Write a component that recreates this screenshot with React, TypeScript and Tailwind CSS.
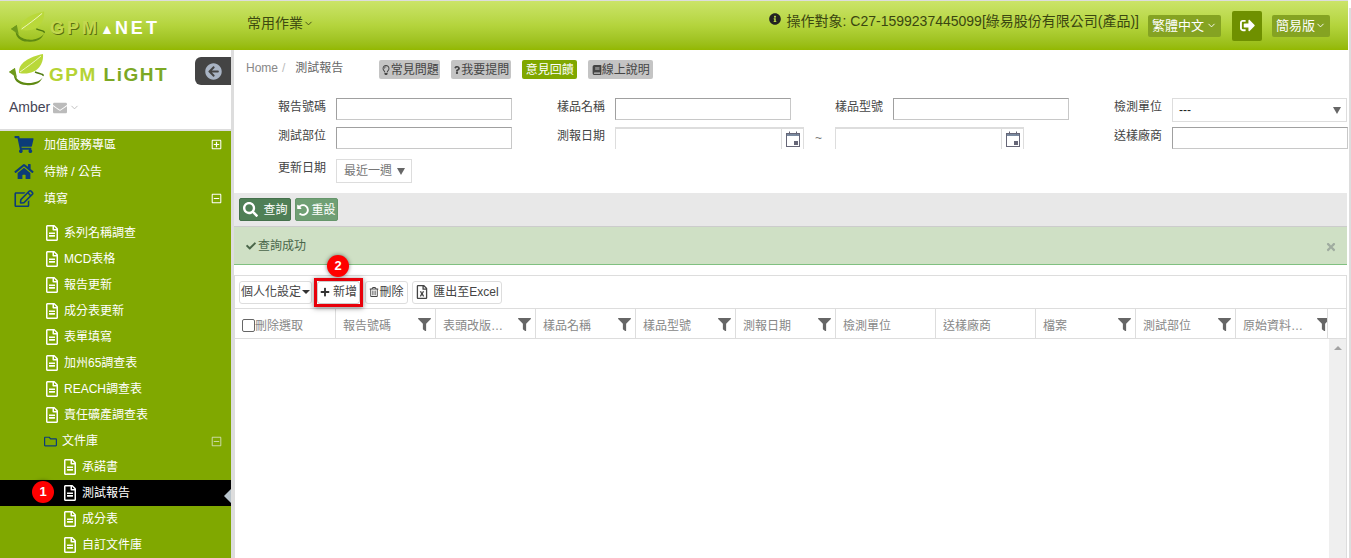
import { ChevronDown } from 'lucide-react';
import React from 'react';
import {
  FaArrowCircleLeft,
  FaBook,
  FaCheck,
  FaFilter,
  FaInfoCircle,
  FaPlus,
  FaRegEdit,
  FaRegFileAlt,
  FaRegFolder,
  FaRegLightbulb,
  FaRegMinusSquare,
  FaRegPlusSquare,
  FaRegTrashAlt,
  FaSearch,
  FaShoppingCart,
  FaHome,
  FaSignOutAlt,
  FaTimes,
  FaUndoAlt,
  FaEnvelope,
  FaQuestion,
  FaRegFileExcel,
} from 'react-icons/fa';

const font = "font-['Liberation_Sans','Noto_Sans_CJK_TC',sans-serif]";

function Leaf({ className }: { className: string }) {
  return (
    <svg viewBox="0 0 36 32" className={className}>
      <path d="M0 18 L6 14 C3 24 12 30 22 29 C28 28 33 26 34 22 C32 30 24 32 17 31 C9 31 4 25 5 20Z" fill="#5f8a12" />
      <path d="M6 14 L8 24 L0 18Z" fill="#6f9a1c" />
      <path d="M10 19 C9 9 20 3 34 0 C35 11 27 22 10 19Z" fill="#b9d83a" />
      <path d="M11 18 C18 13 25 8 32 2" fill="none" stroke="#eef6c0" strokeWidth="1" />
      <path d="M26 18 C31 20 35 20 34 22" fill="none" stroke="#4f7a10" strokeWidth="1.5" />
    </svg>
  );
}

function CalendarIcon() {
  return (
    <svg viewBox="0 0 14 16" className="h-[16px] w-[14px]">
      <rect x="0.5" y="2.5" width="13" height="13" fill="#fff" stroke="#667" />
      <rect x="1" y="3" width="12" height="2" fill="#7a8aa0" />
      <rect x="3" y="0.5" width="1" height="3" fill="#667" />
      <rect x="10" y="0.5" width="1" height="3" fill="#667" />
      <rect x="8" y="10" width="4" height="4" fill="#667" />
    </svg>
  );
}

function Field({ label }: { label: string }) {
  return (
    <div className="flex items-start">
      <span className="w-[92px] text-right leading-[18px] text-[#444]">{label}</span>
      <div className="ml-[10px] h-[22px] w-[176px] border border-[#c8c8c8] border-t-[#a0a0a0] border-l-[#a0a0a0] bg-white" />
    </div>
  );
}

function DateBox() {
  return (
    <div className="flex h-[22px] w-[189px] justify-end border-x border-t-2 border-[#ddd] bg-white">
      <div className="flex h-full w-[22px] items-center justify-center border-l border-[#ddd]">
        <CalendarIcon />
      </div>
    </div>
  );
}

const menuItems = ['系列名稱調查', 'MCD表格', '報告更新', '成分表更新', '表單填寫', '加州65調查表', 'REACH調查表', '責任礦產調查表'];
const subItems = ['承諾書', '測試報告', '成分表', '自訂文件庫'];
const columns = [
  { title: '報告號碼', filter: true },
  { title: '表頭改版…', filter: true },
  { title: '樣品名稱', filter: true },
  { title: '樣品型號', filter: true },
  { title: '測報日期', filter: true },
  { title: '檢測單位', filter: false },
  { title: '送樣廠商', filter: false },
  { title: '檔案', filter: true },
  { title: '測試部位', filter: true },
  { title: '原始資料…', filter: true },
];

export default function App() {
  return (
    <div className={`flex h-[558px] w-[1351px] overflow-hidden bg-white ${font}`}>
      <div className="flex h-full w-[1348px] shrink-0 flex-col">
        <header className="flex h-[50px] shrink-0 items-center border-t border-[#ddd] bg-gradient-to-b from-[#cbe468] via-[#b4d43c] to-[#93b800]">
          <div className="flex w-[247px] items-center pl-[11px] pt-[2px]">
            <Leaf className="h-[32px] w-[35px]" />
            <span className="ml-[4px] mt-[3px] flex items-baseline text-[18px] font-bold leading-none tracking-[3px] text-white">
              <span className="text-[#c3d84f] [text-shadow:1px_1px_0_#5a6e10]">GPM</span>
              <span className="text-[14px] tracking-[1px]">▲</span>NET
            </span>
          </div>
          <div className="mb-[4px] flex items-center text-[14px] text-[#3d4a10]">
            常用作業<ChevronDown size={11} />
          </div>
          <div className="ml-auto flex items-center pr-[18px]">
            <FaInfoCircle className="mb-[14px] mr-[6px] text-[12px] text-[#222]" />
            <span className="mb-[9px] mr-[9px] text-[14px] text-[#3a4610]">操作對象: C27-1599237445099[綠易股份有限公司(產品)]</span>
            <div className="flex h-[22px] w-[73px] items-center justify-center rounded-[2px] bg-[#85a322] text-[13px] text-white">
              繁體中文<ChevronDown size={11} className="ml-[2px]" />
            </div>
            <div className="ml-[11px] flex h-[30px] w-[30px] items-center justify-center rounded-[2px] bg-[#6f9000] text-[15px] text-white">
              <FaSignOutAlt />
            </div>
            <div className="ml-[10px] flex h-[22px] w-[58px] items-center justify-center rounded-[2px] bg-[#85a322] text-[13px] text-white">
              簡易版<ChevronDown size={11} />
            </div>
          </div>
        </header>

        <div className="flex min-h-0 flex-1">
          <aside className="flex w-[234px] shrink-0 flex-col border-r-[3px] border-[#ddd]">
            <div className="relative h-[81px] shrink-0 border-b-2 border-[#ddd] bg-white">
              <div className="flex items-start pl-[9px] pt-[4px]">
                <Leaf className="h-[32px] w-[36px]" />
                <span className="ml-[4px] mt-[11px] text-[19px] font-bold leading-none tracking-[1.5px] text-[#b5d334]">
                  GPM <span className="text-[#7ca824]">LiGHT</span>
                </span>
              </div>
              <div className="absolute right-0 top-[7px] flex h-[28px] w-[36px] items-center justify-center rounded-l-[6px] bg-[#444]">
                <FaArrowCircleLeft className="text-[17px] text-[#a9b4c4]" />
              </div>
              <div className="mt-[11px] flex items-center pl-[9px] text-[14px] text-[#445]">
                Amber
                <FaEnvelope className="ml-[3px] text-[14px] text-[#bbb]" />
                <ChevronDown size={11} className="ml-[2px] text-[#bbb]" />
              </div>
            </div>
            <nav className="min-h-0 flex-1 bg-[#80a800] text-[12px] text-white">
              <div className="flex h-[27px] items-center pl-[14px] pr-[9px]">
                <FaShoppingCart className="w-[20px] text-[17px] text-[#0c3c78]" />
                <span className="ml-[10px] flex-1">加值服務專區</span>
                <FaRegPlusSquare className="text-[11px]" />
              </div>
              <div className="flex h-[27px] items-center pl-[14px] pr-[9px]">
                <FaHome className="w-[20px] text-[17px] text-[#0c3c78]" />
                <span className="ml-[10px] flex-1">待辦 / 公告</span>
              </div>
              <div className="flex h-[27px] items-center pl-[14px] pr-[9px]">
                <FaRegEdit className="w-[20px] text-[17px] text-[#0c3c78]" />
                <span className="ml-[10px] flex-1">填寫</span>
                <FaRegMinusSquare className="text-[11px]" />
              </div>
              <div className="pt-[8px]">
                {menuItems.map((item) => (
                  <div key={item} className="flex h-[26px] items-center pl-[44px]">
                    <FaRegFileAlt className="text-[16px]" />
                    <span className="ml-[4px]">{item}</span>
                  </div>
                ))}
                <div className="flex h-[26px] items-center pl-[44px] pr-[9px]">
                  <FaRegFolder className="text-[13px] text-[#0c3c78]" />
                  <span className="ml-[5px] flex-1">文件庫</span>
                  <FaRegMinusSquare className="text-[11px] text-[#c8d8a0]" />
                </div>
                {subItems.map((item) => (
                  <div
                    key={item}
                    className={`relative flex h-[26px] items-center pl-[62px] ${item === '測試報告' ? 'bg-black' : ''}`}
                  >
                    <FaRegFileAlt className="text-[16px]" />
                    <span className="ml-[4px]">{item}</span>
                    {item === '測試報告' && (
                      <>
                        <span className="absolute left-[32px] top-[1px] flex h-[22px] w-[22px] items-center justify-center rounded-full bg-[#f00] text-[13px] font-bold shadow-[0_0_4px_rgba(0,0,0,0.5)]">
                          1
                        </span>
                        <span className="absolute right-0 top-[9px] h-0 w-0 border-y-[7px] border-r-[7px] border-y-transparent border-r-[#b8c4cc]" />
                      </>
                    )}
                  </div>
                ))}
              </div>
            </nav>
          </aside>

          <main className="min-w-0 flex-1 text-[12px]">
            <div className="flex h-[47px] items-start pt-[10px]">
              <span className="ml-[12px] leading-[16px] text-[#888]">Home</span>
              <span className="ml-[4px] leading-[16px] text-[#bbb]">/</span>
              <span className="ml-[10px] w-[38px] whitespace-nowrap leading-[16px] text-[#666]">測試報告</span>
              <div className="ml-[46px] flex items-center gap-[11px] text-[#444]">
                <span className="flex h-[19px] w-[61px] items-center justify-center rounded-[2px] bg-[#c4c4c4]"><FaRegLightbulb className="text-[10px]" />常見問題</span>
                <span className="flex h-[19px] w-[60px] items-center justify-center rounded-[2px] bg-[#c4c4c4]"><FaQuestion className="text-[8px]" />我要提問</span>
                <span className="flex h-[19px] w-[55px] items-center justify-center rounded-[2px] bg-[#80a800] text-white">意見回饋</span>
                <span className="flex h-[19px] w-[65px] items-center justify-center rounded-[2px] bg-[#c4c4c4]"><FaBook className="text-[10px]" />線上說明</span>
              </div>
            </div>

            <div className="grid grid-cols-[279px_278px_279px_1fr] grid-rows-[29px_32px_24px] items-start pt-[1px]">
              <Field label="報告號碼" />
              <Field label="樣品名稱" />
              <Field label="樣品型號" />
              <div className="flex items-start">
                <span className="w-[92px] text-right leading-[18px] text-[#444]">檢測單位</span>
                <div className="ml-[10px] flex h-[24px] w-[175px] items-center justify-between border border-[#ddd] pl-[6px] pr-[5px] text-[#222]">
                  ---
                  <span className="h-0 w-0 border-x-[4px] border-t-[7px] border-x-transparent border-t-[#666]" />
                </div>
              </div>
              <Field label="測試部位" />
              <div className="col-span-2 flex items-start">
                <span className="w-[92px] text-right leading-[18px] text-[#444]">測報日期</span>
                <div className="ml-[10px] flex items-start">
                  <DateBox />
                  <span className="mx-[11px] mt-[2px] w-[9px] text-[#777]">~</span>
                  <DateBox />
                </div>
              </div>
              <Field label="送樣廠商" />
              <div className="flex items-start">
                <span className="w-[92px] text-right leading-[18px] text-[#444]">更新日期</span>
                <div className="ml-[10px] flex h-[24px] w-[76px] items-center border border-[#ddd] pl-[7px] text-[#777]">
                  最近一週
                  <span className="ml-[5px] h-0 w-0 border-x-[4px] border-t-[7px] border-x-transparent border-t-[#666]" />
                </div>
              </div>
            </div>

            <div className="mt-[10px] flex h-[34px] w-[1113px] items-center gap-[4px] border-b border-[#ccc] bg-[#e8e8e8] pl-[5px] text-white">
              <span className="flex h-[23px] w-[52px] items-center justify-center gap-[5px] rounded-[2px] border border-[#44704b] bg-[#4f7f56] pl-[1px]"><FaSearch className="text-[15px]" />查詢</span>
              <span className="flex h-[23px] w-[43px] items-center justify-center gap-[2px] rounded-[2px] border border-[#66966b] bg-[#6f9f74]"><FaUndoAlt className="text-[12px]" />重設</span>
            </div>
            <div className="flex h-[38px] w-[1113px] items-center justify-between border-b border-[#80c080] bg-[#cfe0c5] pl-[12px] pr-[10px] text-[#4a664a]">
              <span className="flex items-center gap-[2px]"><FaCheck className="text-[10px]" />查詢成功</span>
              <FaTimes className="mt-[2px] text-[12px] text-[#a0aca0]" />
            </div>

            <div className="mt-[10px] w-[1113px] border-t border-[#ddd]">
              <div className="flex h-[32px] items-center border-x border-[#ddd] pl-[4px] text-[#444]">
                <span className="flex h-[23px] w-[73px] items-center justify-center rounded-[3px] border border-[#ddd]">
                  個人化設定
                  <span className="ml-[1px] h-0 w-0 border-x-[4px] border-t-[4px] border-x-transparent border-t-[#333]" />
                </span>
                <span className="relative ml-[5px] flex h-[23px] w-[43px] items-center justify-center gap-[3px] rounded-[3px] border border-[#ccc]">
                  <FaPlus className="text-[10px] text-[#333]" />新增
                  <span className="pointer-events-none absolute -inset-x-[4px] -inset-y-[4px] border-[3px] border-[#e8000a] shadow-[0_1px_5px_rgba(0,0,0,0.5)]" />
                  <span className="absolute -top-[27px] left-[9px] flex h-[22px] w-[22px] items-center justify-center rounded-full bg-[#f00] text-[13px] font-bold text-white shadow-[0_0_4px_rgba(0,0,0,0.5)]">2</span>
                </span>
                <span className="ml-[5px] flex h-[23px] w-[43px] items-center justify-center rounded-[3px] border border-[#ddd]"><FaRegTrashAlt className="text-[10px]" />刪除</span>
                <span className="ml-[4px] flex h-[23px] w-[90px] items-center justify-center gap-[4px] rounded-[3px] border border-[#ddd]"><FaRegFileExcel className="text-[14px]" />匯出至Excel</span>
              </div>
              <div className="flex h-[31px] border-y border-x border-[#ddd] text-[#888]">
                <div className="flex w-[100px] shrink-0 items-center pl-[7px] pt-[4px]">
                  <span className="h-[13px] w-[13px] rounded-[2px] border border-[#666]" />刪除選取
                </div>
                {columns.map((col, i) => (
                  <div
                    key={col.title}
                    className={`flex shrink-0 items-center justify-between overflow-hidden border-l border-[#ddd] pl-[7px] pt-[4px] ${i === 9 ? 'w-[93px] border-r' : 'w-[100px] pr-[4px]'}`}
                  >
                    <span>{col.title}</span>
                    {col.filter && <FaFilter className={`mb-[2px] shrink-0 text-[13px] text-[#666] ${i === 9 ? 'mr-[-3px]' : ''}`} />}
                  </div>
                ))}
              </div>
              <div className="flex h-[220px] justify-end border-x border-[#ddd]">
                <div className="flex w-[17px] justify-center bg-[#efefef] pt-[7px]">
                  <span className="h-0 w-0 border-x-[4px] border-b-[4px] border-x-transparent border-b-[#a3a3a3]" />
                </div>
              </div>
            </div>
          </main>
        </div>
      </div>
      <div className="h-full w-[3px] pl-[1px] pt-[8px]">
        <div className="h-full w-[2px] bg-[#ddd]" />
      </div>
    </div>
  );
}
